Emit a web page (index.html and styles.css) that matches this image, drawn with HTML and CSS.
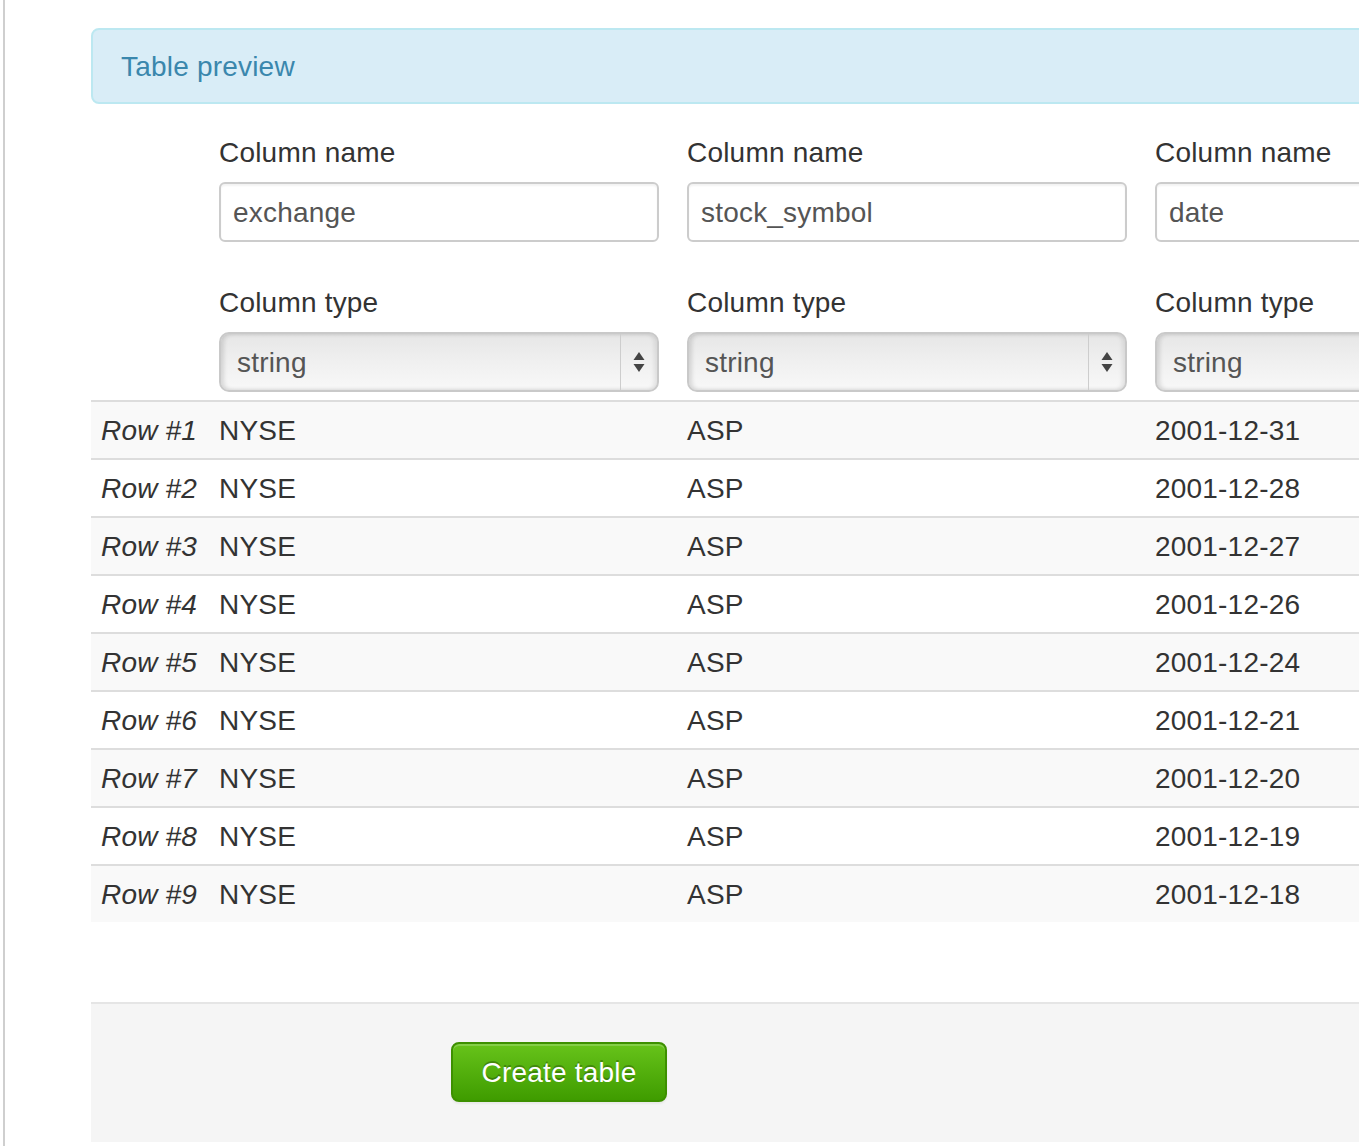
FILE: index.html
```html
<!DOCTYPE html>
<html>
<head>
<meta charset="utf-8">
<title>Table preview</title>
<link rel="stylesheet" href="styles.css">
</head>
<body>
<div class="page">
  <div class="content">
    <div class="alert">Table preview</div>
    <table class="preview">
      <colgroup>
        <col class="c-label">
        <col class="c-col">
        <col class="c-col">
        <col class="c-col">
      </colgroup>
      <thead>
        <tr>
          <th></th>
          <th>
            <label class="lbl">Column name</label>
            <div class="input">exchange</div>
            <label class="lbl">Column type</label>
            <div class="select"><span class="sel-text">string</span><span class="sel-arrows"><svg width="12" height="22" viewBox="0 0 12 22"><polygon points="6,1 11.5,9 0.5,9" fill="#444"/><polygon points="0.5,13 11.5,13 6,21" fill="#444"/></svg></span></div>
          </th>
          <th>
            <label class="lbl">Column name</label>
            <div class="input">stock_symbol</div>
            <label class="lbl">Column type</label>
            <div class="select"><span class="sel-text">string</span><span class="sel-arrows"><svg width="12" height="22" viewBox="0 0 12 22"><polygon points="6,1 11.5,9 0.5,9" fill="#444"/><polygon points="0.5,13 11.5,13 6,21" fill="#444"/></svg></span></div>
          </th>
          <th>
            <label class="lbl">Column name</label>
            <div class="input">date</div>
            <label class="lbl">Column type</label>
            <div class="select"><span class="sel-text">string</span><span class="sel-arrows"><svg width="12" height="22" viewBox="0 0 12 22"><polygon points="6,1 11.5,9 0.5,9" fill="#444"/><polygon points="0.5,13 11.5,13 6,21" fill="#444"/></svg></span></div>
          </th>
        </tr>
      </thead>
      <tbody>
        <tr><td class="rl">Row #1</td><td>NYSE</td><td>ASP</td><td>2001-12-31</td></tr>
        <tr><td class="rl">Row #2</td><td>NYSE</td><td>ASP</td><td>2001-12-28</td></tr>
        <tr><td class="rl">Row #3</td><td>NYSE</td><td>ASP</td><td>2001-12-27</td></tr>
        <tr><td class="rl">Row #4</td><td>NYSE</td><td>ASP</td><td>2001-12-26</td></tr>
        <tr><td class="rl">Row #5</td><td>NYSE</td><td>ASP</td><td>2001-12-24</td></tr>
        <tr><td class="rl">Row #6</td><td>NYSE</td><td>ASP</td><td>2001-12-21</td></tr>
        <tr><td class="rl">Row #7</td><td>NYSE</td><td>ASP</td><td>2001-12-20</td></tr>
        <tr><td class="rl">Row #8</td><td>NYSE</td><td>ASP</td><td>2001-12-19</td></tr>
        <tr><td class="rl">Row #9</td><td>NYSE</td><td>ASP</td><td>2001-12-18</td></tr>
      </tbody>
    </table>
    <div class="form-actions">
      <button class="btn-create">Create table</button>
    </div>
  </div>
</div>
</body>
</html>
```
FILE: styles.css
```css
html, body {
  margin: 0;
  padding: 0;
  background: #fff;
  overflow: hidden;
}
body {
  width: 1359px;
  height: 1146px;
  font-family: "Liberation Sans", Arial, sans-serif;
  font-size: 28px;
  line-height: 40px;
  color: #333;
}
.page {
  margin-left: 3px;
  border-left: 2px solid #cfcfcf;
  height: 1146px;
  box-sizing: border-box;
  padding-left: 86px;
  padding-top: 28px;
  overflow: hidden;
}
.content {
  width: 1600px;
  letter-spacing: 0.2px;
}
.alert {
  background: #d9edf7;
  border: 2px solid #bce8f1;
  border-radius: 8px;
  color: #3a87ad;
  padding: 17px 70px 15px 28px;
  margin-bottom: 20px;
}
.preview {
  border-collapse: collapse;
  table-layout: fixed;
  width: 1522px;
  margin-bottom: 80px;
}
.c-label { width: 118px; }
.c-col { width: 468px; }
.preview th {
  text-align: left;
  font-weight: normal;
  padding: 9px 10px 8px;
  vertical-align: top;
}
.lbl {
  display: block;
  margin-bottom: 9px;
  color: #333;
}
.input {
  box-sizing: border-box;
  width: 440px;
  height: 60px;
  border: 2px solid #ccc;
  border-radius: 6px;
  padding: 9px 12px 7px;
  color: #555;
  margin-bottom: 41px;
  background: #fff;
  box-shadow: inset 0 2px 2px rgba(0,0,0,0.05);
}
.select {
  box-sizing: border-box;
  width: 440px;
  height: 60px;
  border: 2px solid #c9c9c9;
  border-radius: 10px;
  display: flex;
  color: #555;
  background: linear-gradient(#e6e6e6 0%, #efefef 45%, #f8f8f8 100%);
  box-shadow: inset 3px 0 4px rgba(0,0,0,0.12), inset -3px 0 4px rgba(0,0,0,0.08);
}
.sel-text {
  flex: 1;
  padding: 9px 16px 7px;
}
.sel-arrows {
  width: 36px;
  border-left: 1px solid #cdcdcd;
  display: flex;
  align-items: center;
  justify-content: center;
}
.preview td {
  padding: 9px 10px 7px;
  border-top: 2px solid #ddd;
  white-space: nowrap;
}
.preview tbody tr:nth-child(odd) td {
  background: #f9f9f9;
}
.rl {
  font-style: italic;
}
.form-actions {
  background: #f5f5f5;
  border-top: 2px solid #e5e5e5;
  padding: 38px 40px 40px 360px;
}
.btn-create {
  display: block;
  box-sizing: border-box;
  width: 216px;
  height: 60px;
  font-family: "Liberation Sans", Arial, sans-serif;
  font-size: 28px;
  line-height: 40px;
  letter-spacing: 0.2px;
  color: #fff;
  text-shadow: 0 -2px 0 rgba(0,0,0,0.25);
  background: linear-gradient(#67c31a, #3f9c00);
  border: 2px solid #3d9000;
  border-radius: 8px;
  padding: 9px 0 7px;
  box-shadow: inset 0 2px 0 rgba(255,255,255,0.2), 0 2px 2px rgba(0,0,0,0.05);
}
```
